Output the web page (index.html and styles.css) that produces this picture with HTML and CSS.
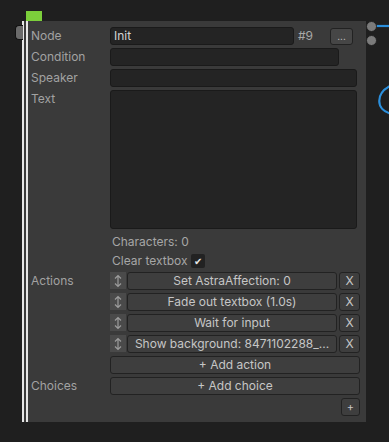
FILE: index.html
```html
<!DOCTYPE html>
<html lang="en">
<head>
  <meta charset="UTF-8" />
  <title>Dialogue Node</title>
  <link rel="stylesheet" href="styles.css">
</head>
<body>
  <div class="graph">
    <svg class="wires" width="389" height="442" viewBox="0 0 389 442">
      <path d="M372 26 L389 26" />
      <path d="M392 85 C 375 93, 375 110, 392 114" />
    </svg>

    <div class="node">
      <div class="node-tab"></div>
      <div class="port-in"></div>
      <div class="port-out port-a"></div>
      <div class="port-out port-b"></div>

      <div class="node-body">
        <div class="row">
          <label class="label">Node</label>
          <div class="field field-node">Init</div>
          <span class="node-id">#9</span>
          <button class="btn btn-more">...</button>
        </div>
        <div class="row">
          <label class="label">Condition</label>
          <div class="field field-cond"></div>
        </div>
        <div class="row">
          <label class="label">Speaker</label>
          <div class="field field-wide"></div>
        </div>
        <div class="row">
          <label class="label">Text</label>
          <div class="field field-wide field-text"></div>
        </div>
        <div class="row row-info">
          <span class="label"></span>
          <span class="info">Characters: 0</span>
        </div>
        <div class="row row-info row-check">
          <span class="label"></span>
          <span class="info">Clear textbox</span>
          <span class="checkbox">&#10004;</span>
        </div>

        <div class="row row-actions">
          <label class="label">Actions</label>
          <div class="stack">
            <div class="action">
              <span class="handle"><svg width="10" height="14" viewBox="0 0 10 14"><path d="M5 1.5 V12.5 M2 4.5 L5 1.5 L8 4.5 M2 9.5 L5 12.5 L8 9.5"/></svg></span>
              <button class="btn btn-action">Set AstraAffection: 0</button>
              <button class="btn btn-x">X</button>
            </div>
            <div class="action">
              <span class="handle"><svg width="10" height="14" viewBox="0 0 10 14"><path d="M5 1.5 V12.5 M2 4.5 L5 1.5 L8 4.5 M2 9.5 L5 12.5 L8 9.5"/></svg></span>
              <button class="btn btn-action">Fade out textbox (1.0s)</button>
              <button class="btn btn-x">X</button>
            </div>
            <div class="action">
              <span class="handle"><svg width="10" height="14" viewBox="0 0 10 14"><path d="M5 1.5 V12.5 M2 4.5 L5 1.5 L8 4.5 M2 9.5 L5 12.5 L8 9.5"/></svg></span>
              <button class="btn btn-action">Wait for input</button>
              <button class="btn btn-x">X</button>
            </div>
            <div class="action">
              <span class="handle"><svg width="10" height="14" viewBox="0 0 10 14"><path d="M5 1.5 V12.5 M2 4.5 L5 1.5 L8 4.5 M2 9.5 L5 12.5 L8 9.5"/></svg></span>
              <button class="btn btn-action">Show background: 8471102288_...</button>
              <button class="btn btn-x">X</button>
            </div>
            <button class="btn btn-full">+ Add action</button>
          </div>
        </div>

        <div class="row row-choices">
          <label class="label">Choices</label>
          <button class="btn btn-full">+ Add choice</button>
        </div>
        <div class="row row-end">
          <button class="btn btn-plus">+</button>
        </div>
      </div>
    </div>
  </div>
</body>
</html>
```

FILE: styles.css
```css
* {
  box-sizing: border-box;
}

body {
  margin: 0;
  background-color: #1f1f1f;
  font-family: Inter, 'Noto Sans', sans-serif;
  font-size: 12px;
  color: #a4a4a4;
  overflow: hidden;
}

.graph {
  position: relative;
  width: 389px;
  height: 442px;
}

.wires {
  position: absolute;
  left: 0;
  top: 0;
}

.wires path {
  fill: none;
  stroke: #2b8fdc;
  stroke-width: 2.2;
}

/* node sits on the free graph canvas */
.node {
  position: absolute;
  left: 22px;
  top: 11px;
  width: 344px;
}

.node-tab {
  width: 16px;
  height: 10px;
  margin-left: 4px;
  background-color: #7ccf3b;
}

.port-in {
  position: absolute;
  left: -7px;
  top: 14px;
  width: 8px;
  height: 15px;
  background-color: #6a6a6a;
  border: 1px solid #111;
  border-right: none;
  border-radius: 4px 0 0 4px;
}

.port-out {
  position: absolute;
  left: 344px;
  width: 11px;
  height: 11px;
  border-radius: 50%;
  background-color: #7b7b7b;
  border: 1px solid #222;
}

.port-a { top: 10px; }
.port-b { top: 24px; }

.node-body {
  background-color: #3a3a3a;
  border-left: 6px double #e6e6e6;
  padding: 6px 6px 6px 3px;
  height: 401px;
}

.row {
  display: flex;
  align-items: center;
  margin-bottom: 3px;
}

.label {
  flex: 0 0 79px;
  align-self: flex-start;
  line-height: 18px;
  color: #a2a2a2;
}

.field {
  height: 18px;
  background-color: #242424;
  border: 1px solid #1a1a1a;
  border-radius: 3px;
  color: #d4d4d4;
  padding: 0 3px;
  line-height: 16px;
}

.field-node { width: 184px; }
.field-cond { width: 229px; }
.field-wide { width: 247px; }
.field-text { height: 139px; }

.node-id {
  margin-left: 4px;
  width: 32px;
  color: #a8a8a8;
  line-height: 18px;
}

.btn {
  font-family: inherit;
  font-size: 12px;
  color: #c6c6c6;
  background-color: #3e3e3e;
  border: 1px solid #222;
  border-radius: 3px;
  padding: 0;
  height: 18px;
  line-height: 16px;
  cursor: pointer;
}

.btn-more {
  width: 23px;
  height: 17px;
  background-color: #464646;
  font-size: 10px;
  line-height: 14px;
}

.row-info {
  margin-bottom: 0;
  height: 19px;
}

.info {
  padding-left: 2px;
  color: #a6a6a6;
}

.row-check {
  margin-bottom: 2px;
}

.checkbox {
  margin-left: 3px;
  width: 14px;
  height: 14px;
  background-color: #222;
  border-radius: 2px;
  color: #e6e6e6;
  font-size: 10px;
  line-height: 14px;
  text-align: center;
}

.stack {
  flex: 1;
  display: flex;
  flex-direction: column;
  gap: 3px;
}

.action {
  display: flex;
  height: 18px;
  gap: 1px;
}

.handle {
  flex: 0 0 16px;
  height: 17px;
  background-color: #4a4a4a;
  display: flex;
  align-items: center;
  justify-content: center;
}

.handle path {
  fill: none;
  stroke: #9c9c9c;
  stroke-width: 1.2;
}

.btn-action {
  flex: 1;
  white-space: nowrap;
  overflow: hidden;
}

.btn-x {
  flex: 0 0 21px;
  margin-left: 1px;
}

.btn-full {
  width: 100%;
  flex: 1;
}

.row-actions {
  margin-bottom: 3px;
}

.row-end {
  justify-content: flex-end;
}

.btn-plus {
  width: 19px;
  height: 18px;
  font-size: 11px;
}
```
